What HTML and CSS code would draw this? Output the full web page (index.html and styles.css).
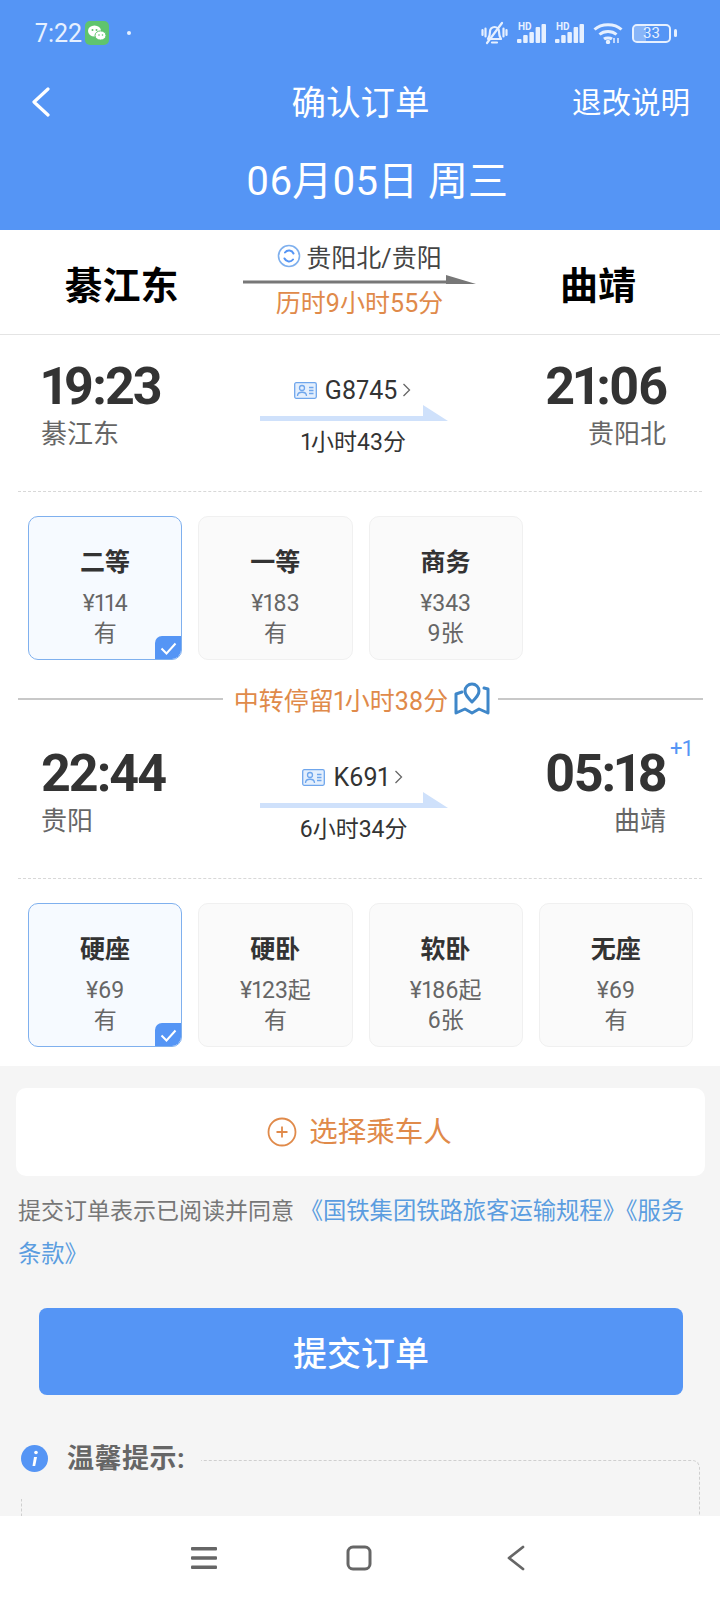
FILE: index.html
```html
<!DOCTYPE html>
<html lang="zh-CN">
<head>
    <meta charset="UTF-8">
    <meta name="viewport" content="width=device-width, initial-scale=1.0">
    <title>确认订单</title>
    <link rel="stylesheet" href="styles.css">
</head>
<body>
    <div class="screen">
        <main class="content">
            <header class="top">
                <div class="status-bar">
                    <span class="clock">7:22</span>
                    <svg class="wechat" viewBox="0 0 24 24">
                        <rect width="24" height="24" rx="5" fill="#5fc46e"/>
                        <ellipse cx="9.500" cy="10" rx="6.500" ry="5.500" fill="#fff"/>
                        <ellipse cx="15.500" cy="14.500" rx="5.500" ry="4.600" fill="#fff" stroke="#5fc46e"/>
                        <circle cx="7.500" cy="9" r="1" fill="#5fc46e"/>
                        <circle cx="11.500" cy="9" r="1" fill="#5fc46e"/>
                        <circle cx="14" cy="14" r=".8" fill="#5fc46e"/>
                        <circle cx="17.500" cy="14" r=".8" fill="#5fc46e"/>
                    </svg>
                    <span class="dot"></span>
                    <div class="status-icons">
                        <svg width="27" height="24" viewBox="0 0 27 24" fill="none" stroke="#e6f0ff" stroke-width="2.200">
                            <path d="M7 18c1.500-2 2-4 2-7.500a4.500 4.500 0 0 1 9 0c0 3.500.5 5.500 2 7.500z" stroke-linejoin="round"/>
                            <path d="M11 21.500h5M6 22 21 2" stroke-linecap="round"/>
                            <path d="M1.500 9v5M4.500 7.500v8M25.500 9v5M22.500 7.500v8" stroke-linecap="round"/>
                        </svg>
                        <div class="signal"><small>HD</small><svg width="29" height="19" viewBox="0 0 29 19" fill="#e6f0ff"><rect x="0" y="15" width="4.500" height="4" rx="1"/><rect x="6.200" y="11" width="4.500" height="8" rx="1"/><rect x="12.400" y="8" width="4.500" height="11" rx="1"/><rect x="18.600" y="3" width="4.500" height="16" rx="1"/><rect x="24.500" y="0" width="4.500" height="19" rx="1"/></svg></div>
                        <div class="signal"><small>HD</small><svg width="29" height="19" viewBox="0 0 29 19" fill="#e6f0ff"><rect x="0" y="15" width="4.500" height="4" rx="1"/><rect x="6.200" y="11" width="4.500" height="8" rx="1"/><rect x="12.400" y="8" width="4.500" height="11" rx="1"/><rect x="18.600" y="3" width="4.500" height="16" rx="1"/><rect x="24.500" y="0" width="4.500" height="19" rx="1"/></svg></div>
                        <svg width="30" height="22" viewBox="0 0 30 22" fill="none" stroke="#e6f0ff" stroke-width="3">
                            <path d="M1.500 7.500c7-6.500 20-6.500 27 0M6.500 12.500c4.500-4 12.500-4 17 0M11 17c2-1.500 6-1.500 8 0"/>
                            <circle cx="15" cy="20" r="2.200" fill="#e6f0ff" stroke="none"/>
                            <path d="M21 16v5M25 16v5" stroke-width="1.500"/>
                        </svg>
                        <div class="battery"><span class="battery-fill"></span><span class="battery-num">33</span></div>
                        <span class="battery-tip"></span>
                    </div>
                </div>
                <div class="nav">
                    <svg class="back" width="20" height="30" viewBox="0 0 20 30" fill="none" stroke="#fff" stroke-width="3.200" stroke-linecap="round" stroke-linejoin="round">
                        <path d="M17 2 3 15l14 13"/>
                    </svg>
                    <h1>确认订单</h1>
                    <a class="nav-link">退改说明</a>
                </div>
                <div class="date">06月05日 周三</div>
            </header>

            <section class="white">
                <div class="route">
                    <div class="route-city">綦江东</div>
                    <div class="route-mid">
                        <div class="route-via">
                            <svg width="24" height="24" viewBox="0 0 24 24" fill="none">
                                <circle cx="12" cy="12" r="10.500" stroke="#7fb0ee" stroke-width="1.600"/>
                                <path d="M16.500 9.500A5 5 0 0 0 8 8.500M7.500 14.500A5 5 0 0 0 16 15.500" stroke="#5595f5" stroke-width="2" stroke-linecap="round"/>
                            </svg>
                            <span>贵阳北/贵阳</span>
                        </div>
                        <svg class="route-arrow" width="233" height="10" viewBox="0 0 233 10">
                            <rect x="0" y="5.500" width="205" height="3" fill="#777"/>
                            <polygon points="203,0 233,9 203,9" fill="#777"/>
                        </svg>
                        <div class="route-time">历时9小时55分</div>
                    </div>
                    <div class="route-city">曲靖</div>
                </div>

                <div class="train">
                    <div>
                        <div class="time">19:23</div>
                        <div class="station">綦江东</div>
                    </div>
                    <div class="train-mid">
                        <div class="train-no">
                            <svg class="card-icon" width="23" height="17" viewBox="0 0 23 17" fill="none" stroke="#6fa6ec" stroke-width="1.300">
                                <rect x=".7" y=".7" width="21.600" height="15.600" rx="1.500" fill="#e4effd"/>
                                <circle cx="8" cy="6" r="2.500"/>
                                <path d="M3.500 14c0-5 9-5 9 0M15 5.500h4.500M15 8.500h4.500M15 11.500h4.500"/>
                            </svg>
                            <span>G8745</span>
                            <svg width="9" height="16" viewBox="0 0 9 16" fill="none" stroke="#666" stroke-width="1.300"><path d="m1.500 2 6 6-6 6"/></svg>
                        </div>
                        <svg class="train-arrow" width="188" height="16" viewBox="0 0 188 16">
                            <rect x="0" y="11" width="165" height="5" fill="#cfe1fb"/>
                            <polygon points="163,0 188,16 163,16" fill="#cfe1fb"/>
                        </svg>
                        <div class="duration">1小时43分</div>
                    </div>
                    <div class="train-end">
                        <div class="time">21:06</div>
                        <div class="station">贵阳北</div>
                    </div>
                </div>

                <div class="seats">
                    <div class="seat selected">
                        <b>二等</b><span>¥114</span><span>有</span>
                        <i class="seat-check"><svg width="17" height="13" viewBox="0 0 17 13" fill="none" stroke="#fff" stroke-width="2"><path d="m1.500 6.500 5 5 9-10"/></svg></i>
                    </div>
                    <div class="seat"><b>一等</b><span>¥183</span><span>有</span></div>
                    <div class="seat"><b>商务</b><span>¥343</span><span>9张</span></div>
                </div>

                <div class="transfer">
                    <span class="transfer-line"></span>
                    <span class="transfer-text">中转停留1小时38分</span>
                    <svg width="36" height="34" viewBox="0 0 36 34" fill="none" stroke="#3f87c9" stroke-width="3" stroke-linejoin="round" stroke-linecap="round">
                        <path d="M18 20c-4-4-7-7-7-11a7 7 0 0 1 14 0c0 4-3 7-7 11z"/>
                        <path d="M8 11 2 13v19l9-4 7 4 7-4 9 4V8l-4-1" transform="translate(0 -1)"/>
                    </svg>
                    <span class="transfer-line"></span>
                </div>

                <div class="train">
                    <div>
                        <div class="time">22:44</div>
                        <div class="station">贵阳</div>
                    </div>
                    <div class="train-mid">
                        <div class="train-no">
                            <svg class="card-icon" width="23" height="17" viewBox="0 0 23 17" fill="none" stroke="#6fa6ec" stroke-width="1.300">
                                <rect x=".7" y=".7" width="21.600" height="15.600" rx="1.500" fill="#e4effd"/>
                                <circle cx="8" cy="6" r="2.500"/>
                                <path d="M3.500 14c0-5 9-5 9 0M15 5.500h4.500M15 8.500h4.500M15 11.500h4.500"/>
                            </svg>
                            <span>K691</span>
                            <svg width="9" height="16" viewBox="0 0 9 16" fill="none" stroke="#666" stroke-width="1.300"><path d="m1.500 2 6 6-6 6"/></svg>
                        </div>
                        <svg class="train-arrow" width="188" height="16" viewBox="0 0 188 16">
                            <rect x="0" y="11" width="165" height="5" fill="#cfe1fb"/>
                            <polygon points="163,0 188,16 163,16" fill="#cfe1fb"/>
                        </svg>
                        <div class="duration">6小时34分</div>
                    </div>
                    <div class="train-end">
                        <div class="time time-next">05:18<sup class="next-day">+1</sup></div>
                        <div class="station">曲靖</div>
                    </div>
                </div>

                <div class="seats">
                    <div class="seat selected">
                        <b>硬座</b><span>¥69</span><span>有</span>
                        <i class="seat-check"><svg width="17" height="13" viewBox="0 0 17 13" fill="none" stroke="#fff" stroke-width="2"><path d="m1.500 6.500 5 5 9-10"/></svg></i>
                    </div>
                    <div class="seat"><b>硬卧</b><span>¥123起</span><span>有</span></div>
                    <div class="seat"><b>软卧</b><span>¥186起</span><span>6张</span></div>
                    <div class="seat"><b>无座</b><span>¥69</span><span>有</span></div>
                </div>
            </section>

            <div class="add-card">
                <svg width="30" height="30" viewBox="0 0 30 30" fill="none" stroke="#e08a4a" stroke-width="1.800">
                    <circle cx="15" cy="15" r="13.500"/>
                    <path d="M15 9.500v11M9.500 15h11"/>
                </svg>
                <span class="add-label">选择乘车人</span>
            </div>

            <p class="agree">提交订单表示已阅读并同意 <a>《国铁集团铁路旅客运输规程》《服务条款》</a></p>

            <button class="submit">提交订单</button>

            <div class="tips">
                <div class="tips-title">
                    <svg width="27" height="27" viewBox="0 0 27 27">
                        <circle cx="13.500" cy="13.500" r="13.500" fill="#5595f5"/>
                        <circle cx="15" cy="7.500" r="1.800" fill="#fff"/>
                        <path d="M13 12h3l-1.800 9H11.500z" fill="#fff"/>
                    </svg>
                    <span>温馨提示:</span>
                </div>
            </div>
        </main>

        <nav class="bottom-nav">
            <svg width="26" height="22" viewBox="0 0 26 22" fill="#666"><rect y="0" width="26" height="3.400" rx="1"/><rect y="9.300" width="26" height="3.400" rx="1"/><rect y="18.600" width="26" height="3.400" rx="1"/></svg>
            <svg class="home" width="26" height="26" viewBox="0 0 26 26" fill="none" stroke="#666" stroke-width="3"><rect x="2" y="2" width="22" height="22" rx="5"/></svg>
            <svg width="20" height="26" viewBox="0 0 20 26" fill="none" stroke="#666" stroke-width="2.800" stroke-linecap="round" stroke-linejoin="round"><path d="M17 2 3 13l14 11"/></svg>
        </nav>
    </div>
</body>
</html>
```

FILE: styles.css
```css
* {
    box-sizing: border-box;
}
body {
    margin: 0;
    font-family: Roboto, 'Noto Sans CJK SC', sans-serif;
    font-variant-numeric: proportional-nums;
    color: #333;
    background-color: #fff;
}
.screen {
    width: 720px;
    height: 1600px;
    display: flex;
    flex-direction: column;
    overflow: hidden;
}
.content {
    flex: 1;
    overflow: hidden;
    background-color: #f5f5f5;
}

/* Blue header */
.top {
    background-color: #5595f5;
    color: #fff;
}
.status-bar {
    height: 66px;
    display: flex;
    align-items: center;
    padding: 0 43px 0 35px;
}
.clock {
    font-size: 25px;
    color: #e6f0ff;
}
.wechat {
    width: 24px;
    height: 24px;
    margin-left: 3px;
}
.dot {
    width: 4px;
    height: 4px;
    margin-left: 18px;
    border-radius: 50%;
    background-color: #e6f0ff;
}
.status-icons {
    margin-left: auto;
    display: flex;
    align-items: center;
    gap: 9px;
}
.signal {
    position: relative;
    width: 29px;
    height: 19px;
}
.signal svg {
    display: block;
}
.signal small {
    position: absolute;
    left: 1px;
    top: -2px;
    font-size: 10px;
    line-height: 10px;
    font-weight: 700;
    color: #e6f0ff;
}
.battery {
    position: relative;
    width: 39px;
    height: 19px;
    border: 2px solid #e6f0ff;
    border-radius: 5px;
    overflow: hidden;
    display: flex;
    align-items: center;
    justify-content: center;
}
.battery-fill {
    position: absolute;
    left: 0;
    top: 0;
    bottom: 0;
    width: 33%;
    background-color: rgba(255, 255, 255, 0.3);
}
.battery-num {
    position: relative;
    font-size: 15px;
    color: #e6f0ff;
}
.battery-tip {
    width: 3px;
    height: 8px;
    margin-left: -6px;
    border-radius: 2px;
    background-color: #e6f0ff;
}
.nav {
    height: 72px;
    display: grid;
    grid-template-columns: 1fr auto 1fr;
    align-items: center;
    padding: 0 30px 0 31px;
}
.nav h1 {
    margin: 0;
    padding-bottom: 4px;
    font-size: 34.5px;
    font-weight: 400;
}
.nav-link {
    justify-self: end;
    padding-bottom: 4px;
    font-size: 29.5px;
}
.date {
    height: 92px;
    padding: 0 0 12px 34px;
    display: flex;
    align-items: center;
    justify-content: center;
    font-size: 40px;
}

/* White block */
.white {
    background-color: #fff;
    padding-bottom: 19px;
}
.route {
    height: 105px;
    display: grid;
    grid-template-columns: 243px 233px 1fr;
    align-items: center;
    border-bottom: 1px solid #e4e4e4;
}
.route-city {
    text-align: center;
    font-size: 38px;
    font-weight: 700;
    color: #000;
}
.route-mid {
    display: flex;
    flex-direction: column;
    align-items: center;
}
.route-via {
    height: 32px;
    padding-bottom: 6px;
    display: flex;
    align-items: center;
    gap: 5px;
    font-size: 25px;
    color: #444;
}
.route-arrow {
    display: block;
}
.route-time {
    margin-top: 2px;
    line-height: 34px;
    font-size: 25px;
    color: #e08a4a;
}
.train {
    height: 157px;
    margin: 0 18px;
    padding: 27px 36px 0 23px;
    display: grid;
    grid-template-columns: 1fr 188px 1fr;
    border-bottom: 1px dashed #d8d8d8;
}
.time {
    font-size: 52px;
    line-height: 50px;
    font-weight: 700;
    letter-spacing: -2px;
}
.time-next {
    position: relative;
}
.next-day {
    position: absolute;
    right: -26px;
    top: -12px;
    font-size: 22px;
    line-height: 24px;
    font-weight: 400;
    letter-spacing: 0;
    color: #5595f5;
}
.station {
    line-height: 44px;
    font-size: 26px;
    color: #666;
}
.train-end {
    text-align: right;
}
.train-mid {
    padding-top: 13px;
    text-align: center;
}
.train-no {
    height: 30px;
    display: flex;
    align-items: center;
    justify-content: center;
    gap: 8px;
    padding-right: 2px;
    font-size: 25px;
}
.train-no svg:last-child {
    margin-left: -3px;
}
.train-arrow {
    display: block;
}
.duration {
    margin-top: 7px;
    line-height: 30px;
    font-size: 23px;
}

/* Seat tiles */
.seats {
    padding: 24px 27px 0 28px;
    display: grid;
    grid-template-columns: repeat(4, 1fr);
    gap: 16px;
}
.seat {
    position: relative;
    height: 144px;
    padding-top: 30px;
    display: flex;
    flex-direction: column;
    align-items: center;
    border: 1px solid #f0f0f0;
    border-radius: 10px;
    background-color: #fafafa;
    overflow: hidden;
    font-size: 23px;
    line-height: 30px;
    color: #666;
}
.seat b {
    margin-bottom: 10px;
    font-size: 25px;
    line-height: 32px;
    color: #333;
}
.seat.selected {
    border-color: #7fb0ee;
    background-color: #f6faff;
}
.seat-check {
    position: absolute;
    right: -1px;
    bottom: -1px;
    width: 27px;
    height: 24px;
    display: flex;
    align-items: center;
    justify-content: center;
    border-radius: 7px 0 0 0;
    background-color: #5595f5;
}

.transfer {
    height: 46px;
    margin-top: 16px;
    padding: 0 17px 0 18px;
    display: flex;
    align-items: center;
    font-size: 25px;
    color: #e08a4a;
}
.transfer-line {
    flex: 1;
    height: 2px;
    background-color: #c8c8c8;
}
.transfer-text {
    margin: 0 6px 0 11px;
    white-space: nowrap;
}
.transfer svg {
    margin-right: 8px;
}

/* Gray block */
.add-card {
    height: 88px;
    margin: 22px 15px 0 16px;
    padding-right: 2px;
    display: flex;
    align-items: center;
    justify-content: center;
    gap: 12px;
    border-radius: 10px;
    background-color: #fff;
    font-size: 28.5px;
    color: #e08a4a;
}
.add-label {
    padding-bottom: 6px;
}
.agree {
    margin: 14px 0 0;
    padding: 0 18px;
    font-size: 23px;
    line-height: 43px;
    color: #777;
}
.agree a {
    font-size: 23.3px;
    color: #5b9de0;
}
.submit {
    display: block;
    width: 644px;
    height: 87px;
    margin: 32px 0 0 39px;
    border: none;
    border-radius: 8px;
    background-color: #5595f5;
    color: #fff;
    font-family: inherit;
    font-size: 34px;
    font-weight: 500;
}
.tips {
    height: 120px;
    margin: 65px 20px 0 21px;
    border: 1px dashed #cfcfcf;
    border-radius: 8px;
}
.tips-title {
    width: 181px;
    height: 59px;
    margin: -21px 0 0 -2px;
    padding-left: 1px;
    display: flex;
    align-items: flex-start;
    gap: 19px;
    background-color: #f5f5f5;
    font-size: 27px;
    font-weight: 700;
    letter-spacing: 0.5px;
    line-height: 38px;
    color: #666;
}
.tips-title svg {
    margin-top: 5px;
    flex-shrink: 0;
}
.bottom-nav {
    height: 84px;
    padding: 0 194px 0 191px;
    display: flex;
    align-items: center;
    justify-content: space-between;
    background-color: #fff;
}
.home {
    margin-right: 6px;
}
```
